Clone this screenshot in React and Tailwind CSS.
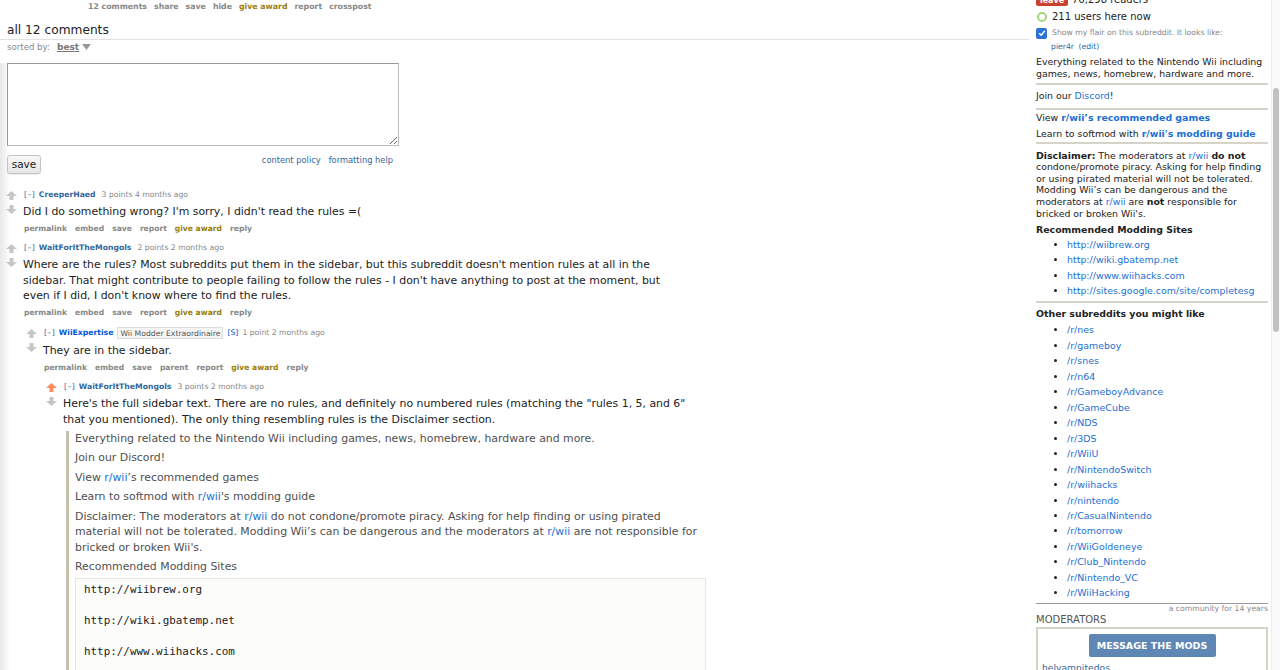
import React from "react";

const Up = ({ on }) => (
  <svg width="11" height="9" viewBox="0 0 11 9" className="block">
    <polygon points="5.5,0 11,5 7.5,5 7.5,9 3.5,9 3.5,5 0,5" fill={on ? "#ff8b60" : "#c6c6c6"} />
  </svg>
);
const Down = () => (
  <svg width="11" height="9" viewBox="0 0 11 9" className="block">
    <polygon points="3.5,0 7.5,0 7.5,4 11,4 5.5,9 0,4 3.5,4" fill="#c6c6c6" />
  </svg>
);

const Buttons = ({ parent }) => (
  <div className="h-[12px] leading-[12px] flex gap-[8px] text-[7.6px] font-bold text-[#888] whitespace-nowrap ml-[1px]">
    <span>permalink</span>
    <span>embed</span>
    <span>save</span>
    {parent && <span>parent</span>}
    <span>report</span>
    <span className="text-[#9a7d0a]">give award</span>
    <span>reply</span>
  </div>
);

const Comment = ({ up, author, authorCls = "text-[#369]", extra, score, scoreCls = "ml-[6px]", body, parent, children }) => (
  <div className="flex">
    <div className="w-[11px] ml-[6px] pt-[2px] flex-none">
      <Up on={up} />
      <div className="h-[5px]" />
      <Down />
    </div>
    <div className="ml-[6px] flex-1">
      <div className="h-[12px] leading-[12px] text-[7.7px] text-[#888] whitespace-nowrap flex items-center ml-[1px]">
        <span className="text-[#369] tracking-[0.5px]">[–]</span>
        <span className={`ml-[3.5px] font-bold ${authorCls}`}>{author}</span>
        {extra}
        <span className={scoreCls}>{score}</span>
      </div>
      <div className="mt-[3px] text-[10.9px] leading-[15.5px] text-[#222] whitespace-nowrap">{body}</div>
      <div className="mt-[3.5px]">
        <Buttons parent={parent} />
      </div>
      {children}
    </div>
  </div>
);

const L = ({ children }) => <span className="text-[#1a6fd6]">{children}</span>;

export default function App() {
  return (
    <div className="w-[1280px] h-[670px] overflow-hidden bg-white flex font-['DejaVu_Sans',Verdana,sans-serif] text-[#222]">
      <main className="w-[1029px] flex-none">
        <div className="pt-[1px] h-[12px] leading-[12px] pl-[88px] text-[7.8px] font-bold text-[#888] flex gap-[7px] whitespace-nowrap">
          <span>12 comments</span>
          <span>share</span>
          <span>save</span>
          <span>hide</span>
          <span className="text-[#9a7d0a]">give award</span>
          <span>report</span>
          <span>crosspost</span>
        </div>
        <div className="mt-[8px] pl-[7px] h-[20px] leading-[21px] text-[12.2px] text-[#222] border-b border-[#e2e2e2]">
          all 12 comments
        </div>
        <div className="pt-[1px] h-[12px] leading-[12px] pl-[7px] text-[8.6px] text-[#888] flex items-center whitespace-nowrap">
          <span>sorted by:</span>
          <span className="ml-[7px] font-bold underline text-[#777] text-[9px]">best</span>
          <svg width="9" height="6" viewBox="0 0 9 6" className="ml-[3px]">
            <polygon points="0,0 9,0 4.5,6" fill="#999" />
          </svg>
        </div>
        <div className="bg-[linear-gradient(to_right,#e8e8e8,#ffffff_10px)] pb-[200px]">
          <textarea
            readOnly
            className="block mt-[11px] ml-[7px] w-[392px] h-[83px] border border-[#bbb] border-t-[#999] border-l-[#999] bg-white outline-none"
          />
          <div className="w-[392px] ml-[7px] mt-[8px] flex justify-between">
            <div className="mt-[1px] w-[34px] h-[19px] rounded-[3px] border border-[#c4c4c4] bg-[linear-gradient(#f8f8f8,#e6e6e6)] text-[10.5px] leading-[17px] text-center text-[#222] shadow-[0_1px_1px_rgba(0,0,0,0.08)]">
              save
            </div>
            <div className="h-[12px] leading-[12px] text-[8.3px] text-[#369] flex gap-[8px] pr-[6px] whitespace-nowrap">
              <span>content policy</span>
              <span>formatting help</span>
            </div>
          </div>
          <div className="mt-[15px]">
            <Comment
              author="CreeperHaed"
              score="3 points 4 months ago"
              body={<div>Did I do something wrong? I'm sorry, I didn't read the rules =(</div>}
            />
            <div className="mt-[7px]">
              <Comment
                author="WaitForItTheMongols"
                score="2 points 2 months ago"
                body={
                  <>
                    <div>Where are the rules? Most subreddits put them in the sidebar, but this subreddit doesn't mention rules at all in the</div>
                    <div>sidebar. That might contribute to people failing to follow the rules - I don't have anything to post at the moment, but</div>
                    <div>even if I did, I don't know where to find the rules.</div>
                  </>
                }
              >
                <div className="mt-[8px] -ml-[3px]">
                  <Comment
                    author="WiiExpertise"
                    authorCls="text-[#0055df]"
                    extra={
                      <>
                        <span className="ml-[4px] px-[2px] h-[12px] leading-[11px] border border-[#ddd] bg-[#f5f5f5] text-[#545454] text-[7.7px]">
                          Wii Modder Extraordinaire
                        </span>
                        <span className="ml-[4px] text-[#0055df]">[S]</span>
                      </>
                    }
                    score="1 point 2 months ago"
                    scoreCls="ml-[4px]"
                    parent
                    body={<div className="pt-[1px]">They are in the sidebar.</div>}
                  >
                    <div className="mt-[7px] -ml-[3px]">
                      <Comment
                        up
                        author="WaitForItTheMongols"
                        score="3 points 2 months ago"
                        body={
                          <div>
                            <div>Here's the full sidebar text. There are no rules, and definitely no numbered rules (matching the "rules 1, 5, and 6"</div>
                            <div>that you mentioned). The only thing resembling rules is the Disclaimer section.</div>
                            <div className="mt-[3.5px] ml-[3px] border-l-[3px] border-[#c5c1ad] pl-[6px] text-[#4f4f4f]">
                              <div>Everything related to the Nintendo Wii including games, news, homebrew, hardware and more.</div>
                              <div className="mt-[4px]">Join our Discord!</div>
                              <div className="mt-[4px]">View <L>r/wii</L>’s recommended games</div>
                              <div className="mt-[4px]">Learn to softmod with <L>r/wii</L>'s modding guide</div>
                              <div className="mt-[4px]">
                                <div>Disclaimer: The moderators at <L>r/wii</L> do not condone/promote piracy. Asking for help finding or using pirated</div>
                                <div>material will not be tolerated. Modding Wii’s can be dangerous and the moderators at <L>r/wii</L> are not responsible for</div>
                                <div>bricked or broken Wii's.</div>
                              </div>
                              <div className="mt-[4px]">Recommended Modding Sites</div>
                              <div className="mt-[3px] w-[631px] bg-[#fcfcfb] border border-[#e6e6de] pl-[8px] pt-[3px] pb-[3px] font-['DejaVu_Sans_Mono',monospace] text-[10.9px] leading-[15.5px] text-[#222]">
                                <div>http://wiibrew.org</div>
                                <div>&nbsp;</div>
                                <div>http://wiki.gbatemp.net</div>
                                <div>&nbsp;</div>
                                <div>http://www.wiihacks.com</div>
                                <div>&nbsp;</div>
                                <div>http://sites.google.com/site/completesg</div>
                              </div>
                            </div>
                          </div>
                        }
                      />
                    </div>
                  </Comment>
                </div>
              </Comment>
            </div>
          </div>
        </div>
      </main>

      <aside className="w-[232px] ml-[7px] flex-none text-[9.4px] leading-[11.6px] text-[#222]">
        <div className="-mt-[6px] h-[12px] flex items-center whitespace-nowrap">
          <span className="w-[32px] h-[11px] rounded-[2px] bg-[#c9412f] text-white text-[8px] font-bold leading-[11px] text-center">leave</span>
          <span className="ml-[4px] text-[10px]">76,298 readers</span>
        </div>
        <div className="mt-[4px] h-[14px] flex items-center whitespace-nowrap">
          <span className="ml-[1px] w-[10px] h-[10px] rounded-full border-[2px] border-[#a6d57c]" />
          <span className="ml-[5px] text-[10px]">211 users here now</span>
        </div>
        <div className="mt-[3px] h-[12px] flex items-center whitespace-nowrap">
          <span className="w-[11px] h-[11px] rounded-[2px] bg-[#2a74d9] flex items-center justify-center">
            <svg width="8" height="8" viewBox="0 0 8 8">
              <polyline points="1.2,4.2 3.2,6.2 6.8,1.8" fill="none" stroke="white" strokeWidth="1.5" />
            </svg>
          </span>
          <span className="ml-[5px] text-[7.7px] text-[#888]">Show my flair on this subreddit. It looks like:</span>
        </div>
        <div className="mt-[2px] h-[12px] leading-[12px] pl-[15px] text-[7.7px] text-[#369] whitespace-nowrap">
          pier4r <span className="ml-[2px]">(edit)</span>
        </div>
        <div className="mt-[3px] leading-[12px]">
          <div>Everything related to the Nintendo Wii including</div>
          <div>games, news, homebrew, hardware and more.</div>
        </div>
        <div className="mt-[3px] h-[2px] bg-[#d6d3c8]" />
        <div className="mt-[5px]">Join our <L>Discord</L>!</div>
        <div className="mt-[6px] h-[2px] bg-[#d6d3c8]" />
        <div className="mt-0 leading-[16px]">
          <div>View <span className="font-bold text-[#1a6fd6]">r/wii’s recommended games</span></div>
          <div>Learn to softmod with <span className="font-bold text-[#1a6fd6]">r/wii's modding guide</span></div>
        </div>
        <div className="mt-0 h-[2px] bg-[#d6d3c8]" />
        <div className="mt-[6px]">
          <div><b>Disclaimer:</b> The moderators at <L>r/wii</L> <b>do not</b></div>
          <div>condone/promote piracy. Asking for help finding</div>
          <div>or using pirated material will not be tolerated.</div>
          <div>Modding Wii’s can be dangerous and the</div>
          <div>moderators at <L>r/wii</L> are <b>not</b> responsible for</div>
          <div>bricked or broken Wii's.</div>
        </div>
        <div className="mt-[5px] font-bold">Recommended Modding Sites</div>
        <ul className="mt-[1px] pl-[31px] list-disc leading-[15.5px] text-[9.45px]">
          <li><L>http://wiibrew.org</L></li>
          <li><L>http://wiki.gbatemp.net</L></li>
          <li><L>http://www.wiihacks.com</L></li>
          <li><L>http://sites.google.com/site/completesg</L></li>
        </ul>
        <div className="mt-[2px] h-[2px] bg-[#d6d3c8]" />
        <div className="mt-[5px] font-bold">Other subreddits you might like</div>
        <ul className="mt-[3px] pl-[31px] list-disc leading-[15.47px] text-[9.45px]">
          {[
            "/r/nes", "/r/gameboy", "/r/snes", "/r/n64", "/r/GameboyAdvance", "/r/GameCube", "/r/NDS", "/r/3DS",
            "/r/WiiU", "/r/NintendoSwitch", "/r/wiihacks", "/r/nintendo", "/r/CasualNintendo", "/r/tomorrow",
            "/r/WiiGoldeneye", "/r/Club_Nintendo", "/r/Nintendo_VC", "/r/WiiHacking",
          ].map((s) => (
            <li key={s}><L>{s}</L></li>
          ))}
        </ul>
        <div className="mt-[2px] h-[1px] bg-[#999]" />
        <div className="mt-0 text-right text-[7.7px] leading-[10px] text-[#888]">a community for 14 years</div>
        <div className="text-[10px] leading-[12px] text-[#545454]">MODERATORS</div>
        <div className="mt-[1px] border-[2px] border-[#d6d3c8] h-[60px] pt-[5px]">
          <div className="mx-auto w-[127px] h-[23px] rounded-[2px] bg-[#5f87b5] text-white font-bold text-[9.5px] leading-[23px] text-center">
            MESSAGE THE MODS
          </div>
          <div className="mt-[5px] pl-[4px] text-[9.2px] text-[#369]">helvamnitedos</div>
        </div>
      </aside>
      <div className="ml-auto w-[9px] flex-none bg-[#fafafa] border-l border-[#ececec] relative">
        <div className="mt-[88px] ml-[1px] w-[6px] h-[244px] rounded-full bg-[#c2c2c2]" />
      </div>
    </div>
  );
}
